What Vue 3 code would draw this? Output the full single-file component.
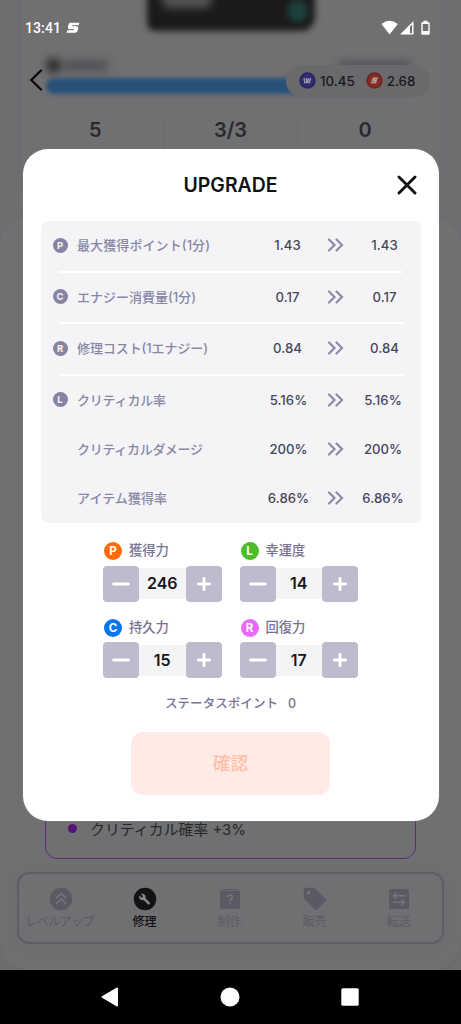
<script setup>
const rows = [
  { badge: 'P', label: '最大獲得ポイント(1分)', value: '1.43', line: true, len: 133 },
  { badge: 'C', label: 'エナジー消費量(1分)', value: '0.17', line: true, len: 119 },
  { badge: 'R', label: '修理コスト(1エナジー)', value: '0.84', line: true, len: 131 },
  { badge: 'L', label: 'クリティカル率', value: '5.16%', percent: true, len: 89 },
  { badge: '', label: 'クリティカルダメージ', value: '200%', percent: true, len: 126 },
  { badge: '', label: 'アイテム獲得率', value: '6.86%', percent: true, len: 90 }
]
const stats = [
  { badge: 'P', label: '獲得力', value: 246, tone: 'orange' },
  { badge: 'L', label: '幸運度', value: 14, tone: 'green' },
  { badge: 'C', label: '持久力', value: 15, tone: 'blue' },
  { badge: 'R', label: '回復力', value: 17, tone: 'pink' }
]
const tabs = [
  { id: 'level', label: 'レベルアップ', len: 69 },
  { id: 'repair', label: '修理', active: true, len: 24 },
  { id: 'make', label: '制作', len: 24 },
  { id: 'sell', label: '販売', len: 24 },
  { id: 'send', label: '転送', len: 24 }
]
</script>

<template>
  <div class="screen">
    <div class="page">
      <section class="summary">
        <div class="photo"><i class="shine"></i><i class="teal"></i></div>
        <div class="owner"><i class="dot"></i><i class="name"></i><i class="id"></i></div>
        <div class="progress"></div>
        <div class="counts">
          <span>5</span><span>3/3</span><span>0</span>
        </div>
      </section>
      <section class="detail">
        <div class="skill"><i></i><span>クリティカル確率 +3%</span></div>
        <nav class="tabs">
          <div v-for="t in tabs" :key="t.id" class="tab" :class="{ active: t.active }">
            <svg width="24" height="24" viewBox="0 0 24 24">
              <template v-if="t.id === 'level'">
                <circle cx="12" cy="12" r="11.2" fill="currentColor" />
                <path d="M7 11.2 12 6.400l5 4.800M7 16.800 12 12l5 4.800" fill="none" stroke="#75757a" stroke-width="1.700" />
              </template>
              <template v-else-if="t.id === 'repair'">
                <circle cx="12" cy="12" r="11.2" fill="currentColor" />
                <path d="M17 15.700 12.500 11.200c.4-1.200.1-2.600-.8-3.500-1-1-2.500-1.200-3.700-.6l2.100 2.100-1.500 1.500-2.200-2.100c-.6 1.200-.3 2.700.7 3.700.9.9 2.300 1.200 3.500.8l4.500 4.500c.2.200.5.200.7 0l1.200-1.100c.2-.3.2-.6 0-.8Z" fill="#85858a" />
              </template>
              <template v-else-if="t.id === 'make'">
                <path d="M4.400 2h15.200l1.200 2.500H3.200Z" fill="currentColor" />
                <path d="M2 3.500h20V20a2 2 0 0 1-2 2H4a2 2 0 0 1-2-2Z" fill="currentColor" />
                <path d="M3.500 3.500h17" stroke="#707072" stroke-width=".8" />
                <path d="M9.700 10.200a2.300 2.300 0 1 1 3.400 2c-.8.5-1.100.9-1.100 1.900M12 15.600v1.600" fill="none" stroke="#75757a" stroke-width="1.500" />
              </template>
              <template v-else-if="t.id === 'sell'">
                <path d="M2.400.8h8.400a2 2 0 0 1 1.400.6l10.400 10.300a1.600 1.600 0 0 1 0 2.300l-8.500 8.500a1.600 1.600 0 0 1-2.300 0L1.400 12.200a2 2 0 0 1-.6-1.400V2.400A1.600 1.600 0 0 1 2.400.8Z" fill="currentColor" />
                <circle cx="5.700" cy="5.800" r="1.700" fill="#75757a" />
              </template>
              <template v-else>
                <rect x="2" y="2" width="20" height="20" rx="1.500" fill="currentColor" />
                <path d="M18.200 8.700H6.500M9.500 5.700l-3 3 3 3M5.800 15.300h11.700M14.500 12.300l3 3-3 3" fill="none" stroke="#75757a" stroke-width="1.500" />
              </template>
            </svg>
            <svg class="tab-text" :width="t.len + 2" height="18"><text x="0.500" y="13" :textLength="t.len">{{ t.label }}</text></svg>
          </div>
        </nav>
      </section>
      <footer class="system">
        <svg width="18" height="20" viewBox="0 0 18 20"><path d="M16 1.500v17L1.500 10Z" fill="#fff" stroke="#fff" stroke-width="2" stroke-linejoin="round" /></svg>
        <svg width="20" height="20"><circle cx="10" cy="10" r="9.500" fill="#fff" /></svg>
        <svg width="18" height="18"><rect x=".3" y=".3" width="17.400" height="17.400" rx="1.500" fill="#fff" /></svg>
      </footer>
    </div>

    <header class="status">
      <span>13:41</span>
      <svg width="14" height="12" viewBox="0 0 14 12"><path d="M4.200.8h9.300l-.9 2.500H6.300l-.3.900h4.200c1.800 0 2.500 1 2 2.500l-.5 1.800c-.5 1.500-1.600 2.300-3.300 2.300H.4l1-2.600h6.500l.3-1H4c-1.700 0-2.500-.9-2-2.400l.4-1.600C2.700 1.800 3.300.8 4.200.8Z" fill="#fff" /></svg>
      <svg class="signals" width="50" height="16" viewBox="0 0 50 16">
        <path d="M.5 4.100Q8.500-2.500 16.800 4.100L8.600 14.500Z" fill="#fff" />
        <path d="M19 14.500 32.500 1v13.500Z" fill="#fff" />
        <path d="M29 6.600 31 4.500v8.700h-2Z" fill="#707072" />
        <path d="M42.500.8h4v1.500h1.200c.6 0 1 .4 1 1v10.400c0 .6-.4 1-1 1h-6.400c-.6 0-1-.4-1-1V3.300c0-.6.4-1 1-1h1.200Z" fill="#fff" />
        <path d="M41.700 4h5.600v7h-5.600Z" fill="#707072" />
      </svg>
    </header>

    <svg class="back" width="14" height="22" viewBox="0 0 14 22"><path d="M12 1.500 2.300 11l9.700 9.500" fill="none" stroke="#090909" stroke-width="2.200" stroke-linecap="round" /></svg>

    <div class="wallet">
      <svg width="17" height="17" viewBox="0 0 17 17"><circle cx="8.500" cy="8.500" r="8.200" fill="#29275f" /><circle cx="8.500" cy="8.500" r="6.400" fill="#312c78" /><path d="M5 6.200l.8 4.300h1.500l1-2.100.6 2.100h1.500l1.200-4.300M7.200 6.200l.4 2.600M9.400 6.200l.3 2.600" fill="none" stroke="#9a9aa5" stroke-width="1.300" /></svg>
      <span>10.45</span>
      <svg class="coin" width="17" height="17" viewBox="0 0 17 17"><circle cx="8.500" cy="8.500" r="8.200" fill="#6e2520" /><circle cx="8.500" cy="8.500" r="6.400" fill="#8a2c23" /><path d="M11.800 6.300H7.500l-.7 2h3.300l-.7 2.200H5" fill="none" stroke="#aaa2a2" stroke-width="1.700" /></svg>
      <span>2.68</span>
    </div>

    <main class="modal">
      <div class="heading">
        <h1>UPGRADE</h1>
        <svg class="close" width="20" height="20" viewBox="0 0 20 20"><path d="m2 2 16 16M18 2 2 18" fill="none" stroke="#111116" stroke-width="2.900" stroke-linecap="round" /></svg>
      </div>
      <div class="panel">
        <div v-for="r in rows" :key="r.label" class="row" :class="{ line: r.line, percent: r.percent }">
          <span class="mini"><b v-if="r.badge">{{ r.badge }}</b></span>
          <svg class="label" width="176" height="22"><text x="0" y="15.500" :textLength="r.len">{{ r.label }}</text></svg>
          <span class="num">{{ r.value }}</span>
          <svg class="chev" width="18" height="14" viewBox="0 0 18 14"><path d="m2 1.500 5.500 5.500L2 12.500M9.500 1.500 15 7l-5.500 5.500" fill="none" stroke="#8c8ba8" stroke-width="2.200" stroke-linecap="round" /></svg>
          <span class="num next">{{ r.value }}</span>
        </div>
      </div>
      <div class="stats">
        <div v-for="s in stats" :key="s.label" class="stat">
          <div class="stat-name"><b :class="s.tone">{{ s.badge }}</b><span>{{ s.label }}</span></div>
          <div class="stepper">
            <button><svg width="18" height="18"><path d="M1.700 9h14.600" stroke="#fff" stroke-width="3.200" stroke-linecap="round" /></svg></button>
            <output>{{ s.value }}</output>
            <button><svg width="18" height="18"><path d="M3.300 9h11.400M9 3.300v11.400" stroke="#fff" stroke-width="2.800" stroke-linecap="round" /></svg></button>
          </div>
        </div>
      </div>
      <div class="points">
        <svg width="114" height="20"><text x="0" y="15" textLength="113">ステータスポイント</text></svg>
        <span>0</span>
      </div>
      <button class="confirm">確認</button>
    </main>
  </div>
</template>

<style>
body { background: #6c6d6f; }
</style>

<style scoped>
* { box-sizing: border-box; }
.screen { position: relative; width: 461px; height: 1024px; overflow: hidden; background: #6d6e70; font-family: Inter, "Noto Sans CJK JP", sans-serif; }
svg { display: block; flex: none; }
button { border: 0; padding: 0; font-family: inherit; }
.page { display: flex; flex-direction: column; height: 1024px; }
.summary { width: 417px; height: 190px; margin: 0 auto; background: #707072; border-radius: 0 0 24px 24px; box-shadow: 0 0 8px #6b6c6e; }
.photo { width: 168px; height: 40px; margin: -9px 0 0 125px; background: #1c191a; filter: blur(3px); display: flex; justify-content: space-between; border-radius: 0 0 14px 8px; }
.shine { width: 50px; height: 17px; margin-left: 15px; background: #555558; border-radius: 8px; filter: blur(3px); }
.teal { width: 21px; height: 22px; margin: 9px 7px 0; background: #1c413d; border-radius: 50%; }
.owner { display: flex; align-items: center; height: 19px; margin: 25px 28px 0 24px; filter: blur(4px); }
.dot { width: 15px; height: 15px; border-radius: 50%; background: #29292c; }
.name { width: 44px; height: 11px; margin-left: 3px; background: #515154; }
.id { width: 72px; height: 9px; margin-left: auto; background: #515155; }
.progress { height: 16px; margin: 3px 26px 0 24px; border-radius: 8px; background: #285178; filter: blur(2px); }
.counts { display: grid; grid-template-columns: 1fr 1fr 1fr; height: 29px; margin: 27px 7px 0 6px; text-align: center; font: 600 20px/20px Inter, sans-serif; color: #29292e; }
.counts span { margin-top: -1px; }
.counts span + span { border-left: 1px solid #69696c; }
.detail { display: flex; flex-direction: column; justify-content: flex-end; height: 751px; margin-top: 29px; padding-bottom: 26px; background: #707072; border-radius: 26px 26px 30px 30px; box-shadow: 0 0 6px #6a6b6d; }
.skill { display: flex; align-items: center; width: 371px; height: 70px; margin: 0 0 13px 45px; padding: 9px 0 0 22px; border: 1.500px solid #612b79; border-radius: 12px; color: #27272a; font-size: 14.900px; }
.skill i { width: 9px; height: 9px; margin-right: 13px; border-radius: 50%; background: #551377; }
.tabs { display: grid; grid-template-columns: repeat(5, 84.700px); justify-content: center; height: 72px; margin: 0 17px; padding-top: 13px; border: 2px solid #5d5d66; border-radius: 12px; box-shadow: 0 4px 20px #6c6c6e; color: #5a5a65; }
.tab { display: flex; flex-direction: column; align-items: center; position: relative; left: -.5px; }
.tab-text { margin-top: 2px; font-size: 12px; fill: currentColor; }
.active { color: #121215; font-weight: 500; }
.system { display: flex; align-items: center; justify-content: center; gap: 101px; height: 54px; padding-right: 2px; background: #000; }
.status { position: absolute; inset: 20px 30px auto 25px; display: flex; align-items: center; height: 16px; color: #fff; font: 500 14px/16px Roboto, sans-serif; letter-spacing: .1px; }
.status svg { margin-left: 5px; }
.status .signals { margin-left: auto; }
.back { position: absolute; left: 29px; top: 69px; }
.wallet { position: absolute; left: 286px; top: 64.500px; display: flex; align-items: center; width: 144px; height: 32px; padding-left: 13px; border-radius: 16px; background: #6a6a6c; color: #18181b; font-size: 13.300px; font-weight: 500; }
.wallet span { margin-left: 4px; }
.wallet .coin { margin-left: 11px; }
.modal { position: absolute; left: 22.500px; top: 149px; display: flex; flex-direction: column; align-items: center; width: 416px; height: 672px; background: #fff; border-radius: 25px; box-shadow: 0 0 2px #858587; }
.heading { display: flex; align-items: center; justify-content: center; width: 100%; height: 72px; }
h1 { margin: 0; font-size: 19.400px; line-height: 24px; font-weight: 600; color: #111116; }
.close { position: absolute; left: 374.500px; top: 26px; }
.panel { width: 380px; height: 302px; border-radius: 8px; background: #f4f4f7; }
.row { display: grid; grid-template-columns: 36px 180px 62px 34px 62px; align-items: center; height: 49.200px; padding-bottom: 1.500px; }
.line { height: 51.600px; background: linear-gradient(#fff, #fff) 18px 100% / 344px 2px no-repeat; padding-bottom: 3px; }
.mini { padding-left: 12px; }
.mini b { display: block; width: 15px; height: 15px; border-radius: 50%; background: #8684a2; color: #f4f4f7; font-size: 9.500px; line-height: 15px; text-align: center; }
.label { font-size: 13px; font-weight: 500; fill: #8887a5; }
.num { text-align: center; font-size: 13.200px; font-weight: 500; color: #47465b; }
.next { padding-left: 2px; }
.percent .num { padding-left: 2px; }
.percent .next { padding: 0 1px 0 0; }
.chev { justify-self: center; }
.stats { display: grid; grid-template-columns: 118.500px 118.500px; column-gap: 18px; margin-top: 18px; }
.stat { height: 76.500px; }
.stat-name { display: flex; align-items: center; height: 20px; padding-left: 1px; }
.stat-name b { width: 18px; height: 18px; border-radius: 50%; color: #fff; font-size: 11.500px; line-height: 18px; text-align: center; }
.stat-name span { margin: -2px 0 0 7px; color: #757392; font-size: 13.300px; line-height: 20px; font-weight: 500; }
.orange { background: #ff6b0b; }
.green { background: #4bbd29; }
.blue { background: #0875f0; }
.pink { background: #ec68fc; }
.stepper { display: flex; align-items: center; margin-top: 4.500px; }
.stepper button { display: flex; align-items: center; justify-content: center; width: 36px; height: 36px; border-radius: 4px; background: #bdbbcd; }
.stepper output { width: 46.500px; height: 31px; background: #f4f4f7; color: #17171b; font-size: 16px; line-height: 30px; font-weight: 600; text-align: center; }
.points { display: flex; align-items: center; height: 20px; margin-top: -1px; color: #757392; font-size: 12.500px; font-weight: 500; }
.points text { fill: #757392; }
.points span { margin-left: 9px; }
.confirm { width: 199px; height: 63px; margin-top: 19px; padding-bottom: 3px; border-radius: 12px; background: #ffebe6; color: #ffc0a9; font-size: 17.700px; font-weight: 500; }
</style>
